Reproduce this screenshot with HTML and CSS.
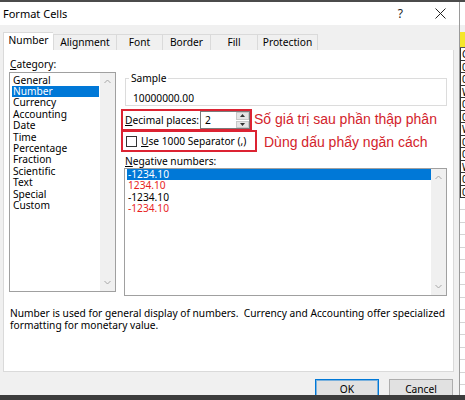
FILE: index.html
```html
<!DOCTYPE html>
<html>
<head>
<meta charset="utf-8">
<link rel="stylesheet" href="styles.css">
</head>
<body>
<div class="topbar"></div>
<div class="main">
  <div class="dialog">
    <div class="titlebar">
      <span class="title">Format Cells</span>
      <span class="help">?</span>
      <svg class="close" width="11" height="11" viewBox="0 0 11 11"><path d="M0.5 0.5L10.5 10.5M10.5 0.5L0.5 10.5" stroke="#222" stroke-width="1" fill="none"/></svg>
    </div>
    <div class="dbody">
      <div class="tabs">
        <div class="tab active t1">Number</div>
        <div class="tab t2">Alignment</div>
        <div class="tab t3">Font</div>
        <div class="tab t4">Border</div>
        <div class="tab t5">Fill</div>
        <div class="tab t6">Protection</div>
      </div>
      <div class="panel">
        <div class="cols">
          <div class="leftcol">
            <div class="lbl cat"><u>C</u>ategory:</div>
            <div class="listbox catlist">
              <div class="items catitems">
                <div class="item">General</div>
                <div class="item sel">Number</div>
                <div class="item">Currency</div>
                <div class="item">Accounting</div>
                <div class="item">Date</div>
                <div class="item">Time</div>
                <div class="item">Percentage</div>
                <div class="item">Fraction</div>
                <div class="item">Scientific</div>
                <div class="item">Text</div>
                <div class="item">Special</div>
                <div class="item">Custom</div>
              </div>
              <div class="scroll">
                <svg width="7" height="5" viewBox="0 0 7 5"><path d="M0.5 4L3.5 1L6.5 4" stroke="#a6a6a6" fill="none"/></svg>
                <svg width="7" height="5" viewBox="0 0 7 5"><path d="M0.5 1L3.5 4L6.5 1" stroke="#a6a6a6" fill="none"/></svg>
              </div>
            </div>
          </div>
          <div class="rightcol">
            <fieldset class="sample">
              <legend>Sample</legend>
              <div class="sval">10000000.00</div>
            </fieldset>
            <div class="annrow r1">
              <div class="redbox rb1">
                <span class="dlbl"><u>D</u>ecimal places:</span>
                <div class="spin">
                  <span class="sv">2</span>
                  <div class="spinbtns">
                    <div class="sb"><svg width="5" height="3" viewBox="0 0 5 3"><path d="M0 3L2.5 0L5 3Z" fill="#333"/></svg></div>
                    <div class="sb"><svg width="5" height="3" viewBox="0 0 5 3"><path d="M0 0L2.5 3L5 0Z" fill="#333"/></svg></div>
                  </div>
                </div>
              </div>
              <span class="ann a1">Số giá trị sau phần thập phân</span>
            </div>
            <div class="annrow r2">
              <div class="redbox rb2">
                <span class="chk"></span>
                <span><u>U</u>se 1000 Separator (,)</span>
              </div>
              <span class="ann a2">Dùng dấu phẩy ngăn cách</span>
            </div>
            <div class="lbl neg"><u>N</u>egative numbers:</div>
            <div class="listbox neglist">
              <div class="items negitems">
                <div class="item sel">-1234.10</div>
                <div class="item red">1234.10</div>
                <div class="item">-1234.10</div>
                <div class="item red">-1234.10</div>
              </div>
              <div class="scroll">
                <svg width="7" height="5" viewBox="0 0 7 5"><path d="M0.5 4L3.5 1L6.5 4" stroke="#a6a6a6" fill="none"/></svg>
                <svg width="7" height="5" viewBox="0 0 7 5"><path d="M0.5 1L3.5 4L6.5 1" stroke="#a6a6a6" fill="none"/></svg>
              </div>
            </div>
          </div>
        </div>
        <div class="desc">Number is used for general display of numbers.&nbsp; Currency and Accounting offer specialized<br>formatting for monetary value.</div>
      </div>
      <div class="buttons">
        <div class="btn ok">OK</div>
        <div class="btn">Cancel</div>
      </div>
    </div>
  </div>
  <div class="sheet">
    <div class="shtop"></div>
    <div class="shyellow"></div>
    <div class="shcell">C</div>
    <div class="shcell">0</div>
    <div class="shcell">0</div>
    <div class="shcell">W</div>
    <div class="shcell">0</div>
    <div class="shcell">0</div>
    <div class="shcell">W</div>
    <div class="shcell">0</div>
    <div class="shcell">0</div>
    <div class="shcell">W</div>
    <div class="shcell">0</div>
    <div class="shcell last">0</div>
    <div class="shgrid"></div>
  </div>
</div>
<div class="bottombar"></div>
</body>
</html>
```
FILE: styles.css
```css
* { box-sizing: border-box; }
html, body { margin: 0; padding: 0; }
body {
  width: 465px;
  height: 400px;
  overflow: hidden;
  font-family: "Noto Sans", "Open Sans", sans-serif;
  font-size: 10.2px;
  color: #000;
  background: #f0f0f0;
}
u { text-decoration: underline; text-underline-offset: 1px; }
.topbar { height: 2px; background: #4b4b4b; }
.bottombar { height: 5px; background: #3c3c3c; }
.main { display: flex; height: 393px; }

.dialog {
  width: 460px;
  display: flex;
  flex-direction: column;
  background: #f0f0f0;
  overflow: hidden;
  border-right: 1px solid #9a9a9a;
}
.titlebar {
  height: 23px;
  flex: none;
  background: #fff;
  display: flex;
  align-items: center;
  padding-left: 3px;
}
.title { flex: 1; font-size: 11px; }
.help { font-size: 12px; margin-right: 32px; color: #222; }
.close { margin-right: 13px; }

.dbody { flex: 1; padding: 7px 5px 0 3px; overflow: hidden; }
.tabs { display: flex; align-items: flex-end; height: 18px; }
.tab {
  height: 16px;
  border: 1px solid #dadada;
  border-bottom: none;
  border-right: none;
  display: flex;
  align-items: center;
  justify-content: center;
  background: #f0f0f0;
  padding-bottom: 1px;
}
.tab.active { height: 18px; background: #fff; padding-bottom: 3px; }
.t1 { width: 50px; }
.t2 { width: 63px; }
.t3 { width: 46px; }
.t4 { width: 48px; }
.t5 { width: 47px; }
.t6 { width: 61px; border-right: 1px solid #dadada; }

.panel {
  height: 322px;
  background: #fff;
  border: 1px solid #dadada;
  border-top: none;
  padding: 8px 5px 0 5px;
}
.cols { display: flex; gap: 5px; align-items: flex-start; }
.leftcol { width: 107px; display: flex; flex-direction: column; }
.lbl { line-height: 12px; height: 12px; }
.lbl.cat { padding-left: 1px; margin-bottom: 2px; }

.listbox {
  border: 1px solid #a0a0a0;
  display: flex;
  background: #fff;
}
.catlist { height: 220px; }
.items { line-height: 11.4px; }
.catitems { width: 87px; margin-left: 2px; padding-top: 1.5px; }
.item { padding-left: 1px; white-space: nowrap; }
.item.sel { background: #0078d7; color: #fff; }
.item.red { color: #e81e1e; }
.scroll {
  width: 15px;
  margin-left: auto;
  background: #f0f0f0;
  display: flex;
  flex-direction: column;
  justify-content: space-between;
  align-items: center;
  padding: 6px 0 6px;
}

.rightcol { width: 326px; display: flex; flex-direction: column; }
.sample {
  margin: 14px 0 0 4px;
  width: 322px;
  border: 1px solid #dcdcdc;
  padding: 8px 2px 1px 3px;
  min-inline-size: 0;
}
.sample legend { padding: 0 2px; line-height: 12px; }
.sval { padding-left: 4px; line-height: 12px; }

.annrow { display: flex; align-items: center; }
.redbox {
  border: 2px solid #dc2332;
  display: flex;
  align-items: center;
}
.rb1 { width: 131px; height: 22px; margin-top: 3px; padding-left: 2px; }
.dlbl { flex: 1; }
.spin {
  width: 50px;
  height: 18px;
  border: 1px solid #7a7a7a;
  display: flex;
  align-items: center;
  padding-left: 4px;
  background: #fff;
}
.sv { flex: 1; }
.spinbtns {
  width: 13px;
  height: 16px;
  display: flex;
  flex-direction: column;
  gap: 1px;
}
.sb {
  flex: 1;
  background: #e5e5e5;
  border: 1px solid #c8c8c8;
  display: flex;
  align-items: center;
  justify-content: center;
}
.ann {
  font-family: "Liberation Sans", Arial, sans-serif;
  font-size: 14px;
  color: #d3232b;
  white-space: nowrap;
}
.a1 { margin-left: 2px; margin-top: 1px; }
.rb2 { width: 136px; height: 22px; margin-top: -1px; padding-left: 3px; }
.chk { width: 11px; height: 11px; border: 1px solid #333; margin-right: 4px; background: #fff; }
.a2 { margin-left: 7px; }

.lbl.neg { margin-top: 3px; padding-left: 4px; }
.neglist { margin: 1px 0 0 3px; width: 323px; height: 128px; }
.negitems { width: 304px; margin-left: 2px; }

.desc { margin-top: 11px; padding-left: 1px; line-height: 12px; }

.buttons { display: flex; justify-content: flex-end; gap: 10px; margin-top: 7px; padding-right: 1px; }
.btn {
  width: 64px;
  height: 20px;
  background: #e1e1e1;
  border: 1px solid #adadad;
  display: flex;
  align-items: center;
  justify-content: center;
}
.btn.ok { border: 1px solid #0078d7; box-shadow: inset 0 0 0 1px rgba(0,120,215,0.45); }

.sheet { flex: 1; display: flex; flex-direction: column; background: #fff; overflow: hidden; }
.shtop { height: 30px; flex: none; background: linear-gradient(#fff 0 23px, #f0f0f0 23px); }
.shyellow { height: 16px; flex: none; background: #f5e62a; border-bottom: 1px solid #555; }
.shcell {
  height: 12.5px;
  flex: none;
  border-bottom: 1px solid #333;
  border-left: 1px solid #333;
  font-size: 10px;
  line-height: 12px;
  padding-left: 1px;
  white-space: nowrap;
}
.shgrid {
  flex: 1;
  background: repeating-linear-gradient(#fff 0 11.5px, #d4d4d4 11.5px 12.5px);
}
```
